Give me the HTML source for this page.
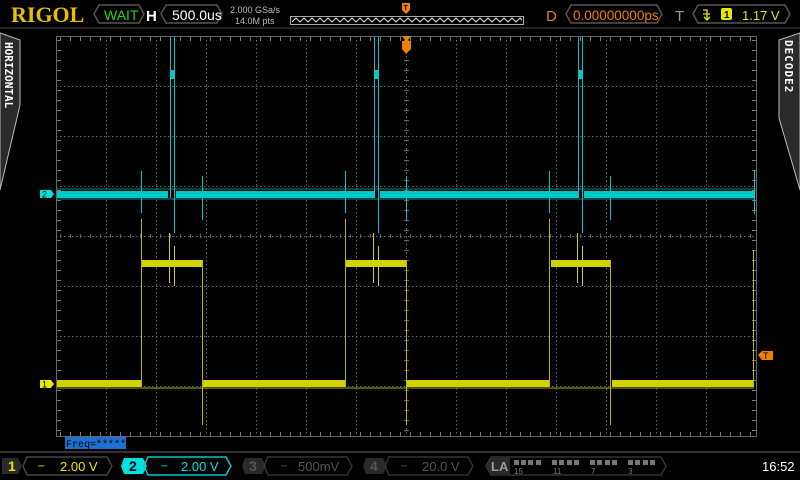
<!DOCTYPE html>
<html><head><meta charset="utf-8"><style>
html,body{margin:0;padding:0;background:#000;width:800px;height:480px;overflow:hidden}
svg{display:block}
text{font-family:"Liberation Sans",sans-serif}
</style></head><body>
<svg width="800" height="480" viewBox="0 0 800 480" xmlns="http://www.w3.org/2000/svg">
<defs>
<pattern id="dv" width="1" height="4" patternUnits="userSpaceOnUse"><rect width="1" height="1.5" fill="#6a6a6a"/></pattern>
<pattern id="dh" width="4" height="1" patternUnits="userSpaceOnUse"><rect width="1.5" height="1" fill="#6a6a6a"/></pattern>
<pattern id="tkx" width="10" height="5" patternUnits="userSpaceOnUse"><rect width="1" height="5" fill="#777"/></pattern>
<pattern id="tky" width="5" height="10" patternUnits="userSpaceOnUse"><rect width="5" height="1" fill="#777"/></pattern>
</defs>
<rect width="800" height="480" fill="#000"/>
<!-- top bar -->
<text x="11" y="22" style="font-family:'Liberation Serif',serif;font-weight:bold;font-size:22px" fill="#e8c000">RIGOL</text>
<polygon points="99,5 139,5 144,14 139,23 99,23 94,14" fill="none" stroke="#555" stroke-width="1.5"/>
<text x="104" y="20" font-size="14" fill="#1ed51e">WAIT</text>
<text x="146" y="21" font-size="15" font-weight="bold" fill="#fff">H</text>
<polygon points="166,5 217,5 222,14 217,23 166,23 161,14" fill="none" stroke="#555" stroke-width="1.5"/>
<text x="172" y="20" font-size="14" fill="#fff">500.0us</text>
<text x="230" y="13" font-size="9" fill="#bbb">2.000 GSa/s</text>
<text x="235" y="24" font-size="9" fill="#bbb">14.0M pts</text>
<rect x="290.5" y="16.5" width="233" height="8" fill="none" stroke="#aaa"/>
<polyline points="292,22 296,18 300,22 304,18 308,22 312,18 316,22 320,18 324,22 328,18 332,22 336,18 340,22 344,18 348,22 352,18 356,22 360,18 364,22 368,18 372,22 376,18 380,22 384,18 388,22 392,18 396,22 400,18 404,22 408,18 412,22 416,18 420,22 424,18 428,22 432,18 436,22 440,18 444,22 448,18 452,22 456,18 460,22 464,18 468,22 472,18 476,22 480,18 484,22 488,18 492,22 496,18 500,22 504,18 508,22 512,18 516,22 520,18 522,20" fill="none" stroke="#ddd" stroke-width="1"/>
<polygon points="402,3 410,3 410,10 406,14 402,10" fill="#f08000"/>
<text x="403.5" y="10" font-size="7" fill="#000" font-weight="bold">T</text>
<text x="546" y="21" font-size="15" fill="#f08000">D</text>
<polygon points="571,5 657,5 662,14 657,23 571,23 566,14" fill="none" stroke="#555" stroke-width="1.5"/>
<text x="573" y="20" font-size="13.5" fill="#f08000">0.00000000ps</text>
<text x="675" y="21" font-size="15" fill="#999">T</text>
<polygon points="698,5 785,5 790,14 785,23 698,23 693,14" fill="none" stroke="#555" stroke-width="1.5"/>
<path d="M703,10 h4 v9 M704,17 l3,3 l3,-3 M703,14 h7" stroke="#e8e800" fill="none" stroke-width="1.3"/>
<rect x="721" y="8" width="11" height="12" rx="2" fill="#e8e800"/>
<text x="724" y="18" font-size="10" font-weight="bold" fill="#000">1</text>
<text x="742" y="20" font-size="13" fill="#e8e800">1.17 V</text>
<rect x="0" y="27" width="800" height="2" fill="#222"/>
<!-- side tabs -->
<polygon points="0,33 20,40 20,105 0,190" fill="#2a2a2a" stroke="#bbb" stroke-width="1"/>
<text transform="translate(5,42) rotate(90)" style="font-family:'DejaVu Sans Mono',monospace;font-size:11px;font-weight:bold" fill="#fff">HORIZONTAL</text>
<polygon points="800,33 779,40 779,118 800,190" fill="#2a2a2a" stroke="#bbb" stroke-width="1"/>
<text transform="translate(785,40) rotate(90)" style="font-family:'DejaVu Sans Mono',monospace;font-size:11px;font-weight:bold" fill="#fff" letter-spacing="1">DECODE2</text>
<!-- grid -->
<rect x="56.5" y="36.5" width="700" height="400" fill="none" stroke="#666"/>
<g>
<rect x="106" y="37" width="1" height="399" fill="url(#dv)"/>
<rect x="156" y="37" width="1" height="399" fill="url(#dv)"/>
<rect x="206" y="37" width="1" height="399" fill="url(#dv)"/>
<rect x="256" y="37" width="1" height="399" fill="url(#dv)"/>
<rect x="306" y="37" width="1" height="399" fill="url(#dv)"/>
<rect x="356" y="37" width="1" height="399" fill="url(#dv)"/>
<rect x="456" y="37" width="1" height="399" fill="url(#dv)"/>
<rect x="506" y="37" width="1" height="399" fill="url(#dv)"/>
<rect x="556" y="37" width="1" height="399" fill="url(#dv)"/>
<rect x="606" y="37" width="1" height="399" fill="url(#dv)"/>
<rect x="656" y="37" width="1" height="399" fill="url(#dv)"/>
<rect x="706" y="37" width="1" height="399" fill="url(#dv)"/>
<rect x="57" y="86" width="699" height="1" fill="url(#dh)"/>
<rect x="57" y="136" width="699" height="1" fill="url(#dh)"/>
<rect x="57" y="186" width="699" height="1" fill="url(#dh)"/>
<rect x="57" y="286" width="699" height="1" fill="url(#dh)"/>
<rect x="57" y="336" width="699" height="1" fill="url(#dh)"/>
<rect x="57" y="386" width="699" height="1" fill="url(#dh)"/>
<rect x="57" y="236" width="699" height="1" fill="url(#dh)"/>
<rect x="406" y="37" width="1" height="399" fill="url(#dv)"/>
<rect x="57" y="37" width="699" height="4" fill="url(#tkx)"/>
<rect x="57" y="432" width="699" height="4" fill="url(#tkx)"/>
<rect x="57" y="37" width="4" height="399" fill="url(#tky)"/>
<rect x="752" y="37" width="4" height="399" fill="url(#tky)"/>
<rect x="57" y="234" width="699" height="4" fill="url(#tkx)" opacity=".8"/>
<rect x="404" y="37" width="5" height="399" fill="url(#tky)" opacity=".8"/>
</g>
<!-- ch2 cyan -->
<g fill="#00c8c8">
<rect x="57" y="191" width="111" height="7"/>
<rect x="176" y="191" width="198" height="7"/>
<rect x="380" y="191" width="198" height="7"/>
<rect x="584" y="191" width="170" height="7"/>
<rect x="57" y="188" width="697" height="2" opacity=".35"/>
<rect x="57" y="198" width="697" height="2" opacity=".35"/>
<rect x="170" y="37" width="1" height="161"/><rect x="174" y="37" width="1" height="196"/><rect x="170" y="70" width="5" height="9"/>
<rect x="374" y="37" width="1" height="161"/><rect x="378" y="37" width="1" height="196"/><rect x="374" y="70" width="5" height="9"/>
<rect x="578" y="37" width="1" height="161"/><rect x="582" y="37" width="1" height="196"/><rect x="578" y="70" width="5" height="9"/>
<rect x="141" y="171" width="1" height="42"/><rect x="202" y="176" width="1" height="44"/>
<rect x="345" y="171" width="1" height="42"/><rect x="406" y="176" width="1" height="44"/>
<rect x="549" y="171" width="1" height="42"/><rect x="610" y="176" width="1" height="44"/>
<rect x="754" y="170" width="1" height="44"/>
</g>
<!-- ch1 yellow -->
<g fill="#d2d200">
<rect x="57" y="380" width="85" height="7"/>
<rect x="142" y="260" width="60" height="7"/>
<rect x="203" y="380" width="142" height="7"/>
<rect x="346" y="260" width="60" height="7"/>
<rect x="407" y="380" width="143" height="7"/>
<rect x="551" y="260" width="60" height="7"/>
<rect x="612" y="380" width="142" height="7"/>
<rect x="141" y="219" width="1" height="168" fill="#b8b800"/><rect x="202" y="260" width="1" height="165" fill="#b8b800"/>
<rect x="345" y="219" width="1" height="168" fill="#b8b800"/><rect x="406" y="260" width="1" height="165" fill="#b8b800"/>
<rect x="549" y="219" width="1" height="168" fill="#b8b800"/><rect x="610" y="260" width="1" height="165" fill="#b8b800"/>
<rect x="753" y="250" width="1" height="137" fill="#b8b800"/>
<rect x="169" y="233" width="1" height="50"/><rect x="174" y="246" width="1" height="40"/>
<rect x="373" y="233" width="1" height="50"/><rect x="378" y="246" width="1" height="40"/>
<rect x="577" y="233" width="1" height="50"/><rect x="582" y="246" width="1" height="40"/>
<rect x="57" y="387" width="697" height="2" opacity=".4"/>
</g>
<!-- markers -->
<polygon points="40,190 51,190 54,194 51,198 40,198" fill="#00e0e0"/>
<text x="42" y="197.5" font-size="9" fill="#000">2</text>
<polygon points="40,380 51,380 54,384 51,388 40,388" fill="#e8e800"/>
<text x="42" y="387.5" font-size="9" fill="#000">1</text>
<polygon points="402,36 411,36 408,40 408,41 411,41 411,49 406,54 402,49 402,41 405,41 405,40" fill="#f08000"/>
<polygon points="758,355 762,351 773,351 773,360 762,360" fill="#f08000"/>
<text x="763" y="359" font-size="9" fill="#000">T</text>
<rect x="65" y="437" width="61" height="12" fill="#1e6fd0"/>
<text x="66" y="447" style="font-family:'Liberation Mono',monospace;font-size:10px" fill="#001">Freq=*****</text>
<!-- bottom bar -->
<rect x="0" y="451" width="800" height="2" fill="#333"/>
<polygon points="2,458 18,458 22,466 18,474 2,474" fill="#2a2a2a"/>
<text x="8" y="471" font-size="14" font-weight="bold" fill="#e8e800">1</text>
<polygon points="27,457 107,457 112,466 107,475 27,475 23,466" fill="none" stroke="#444" stroke-width="1.5"/>
<text x="38" y="468" font-size="8" fill="#e8e800">⎓</text>
<text x="60" y="471" font-size="13" fill="#e8e800">2.00 V</text>
<polygon points="124,458 143,458 147,466 143,474 124,474 121,466" fill="#00e0e0"/>
<text x="129" y="471" font-size="14" font-weight="bold" fill="#000">2</text>
<polygon points="148,457 226,457 231,466 226,475 148,475 144,466" fill="none" stroke="#00c8c8" stroke-width="1.5"/>
<text x="161" y="468" font-size="8" fill="#00e0e0">⎓</text>
<text x="181" y="471" font-size="13" fill="#00e0e0">2.00 V</text>
<polygon points="245,458 262,458 266,466 262,474 245,474 242,466" fill="#2a2a2a"/>
<text x="249" y="471" font-size="14" font-weight="bold" fill="#555">3</text>
<polygon points="268,457 347,457 352,466 347,475 268,475 264,466" fill="none" stroke="#333" stroke-width="1.5"/>
<text x="281" y="468" font-size="8" fill="#555">⎓</text>
<text x="298" y="471" font-size="13" fill="#555">500mV</text>
<polygon points="366,458 383,458 387,466 383,474 366,474 363,466" fill="#2a2a2a"/>
<text x="370" y="471" font-size="14" font-weight="bold" fill="#555">4</text>
<polygon points="389,457 468,457 473,466 468,475 389,475 385,466" fill="none" stroke="#333" stroke-width="1.5"/>
<text x="401" y="468" font-size="8" fill="#555">⎓</text>
<text x="422" y="471" font-size="13" fill="#555">20.0 V</text>
<polygon points="491,457 661,457 666,466 661,475 491,475 486,466" fill="none" stroke="#333" stroke-width="1.5"/>
<polygon points="491,458 510,458 510,474 491,474 487,466" fill="#2a2a2a"/>
<text x="491" y="471" font-size="13" font-weight="bold" fill="#999">LA</text>
<g fill="#777">
<rect x="514" y="460" width="5" height="5"/><rect x="521" y="460" width="5" height="5"/><rect x="528" y="460" width="5" height="5"/><rect x="536" y="460" width="5" height="5"/>
<rect x="552" y="460" width="5" height="5"/><rect x="559" y="460" width="5" height="5"/><rect x="567" y="460" width="5" height="5"/><rect x="574" y="460" width="5" height="5"/>
<rect x="590" y="460" width="5" height="5"/><rect x="597" y="460" width="5" height="5"/><rect x="605" y="460" width="5" height="5"/><rect x="612" y="460" width="5" height="5"/>
<rect x="628" y="460" width="5" height="5"/><rect x="635" y="460" width="5" height="5"/><rect x="643" y="460" width="5" height="5"/><rect x="650" y="460" width="5" height="5"/>
</g>
<g font-size="8" fill="#777"><text x="514" y="474">15</text><text x="553" y="474">11</text><text x="591" y="474">7</text><text x="628" y="474">3</text></g>
<text x="762" y="471" font-size="13" fill="#fff">16:52</text>
</svg>
</body></html>
